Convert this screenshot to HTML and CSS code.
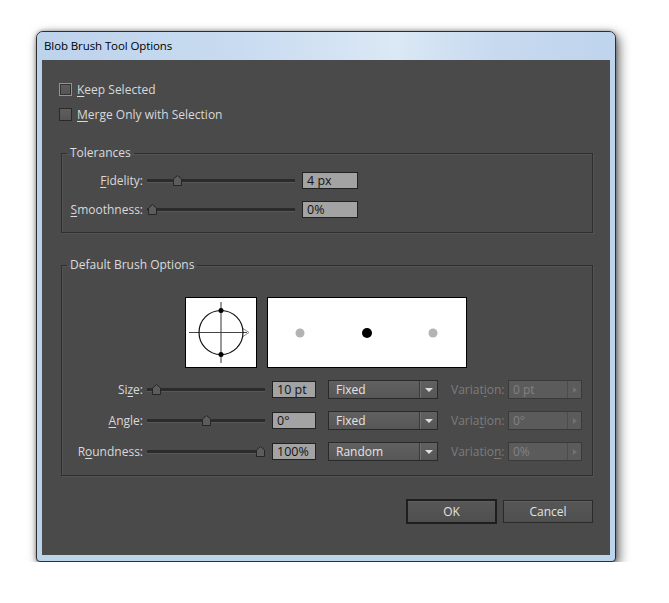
FILE: index.html
```html
<!DOCTYPE html>
<html>
<head>
<meta charset="utf-8">
<link rel="stylesheet" href="styles.css">
</head>
<body>
<div class="window">
  <div class="titlebar">Blob Brush Tool Options</div>
  <div class="content">
    <div class="check-row"><span class="checkbox focused"></span><span><u>K</u>eep Selected</span></div>
    <div class="check-row"><span class="checkbox"></span><span><u>M</u>erge Only with Selection</span></div>

    <fieldset class="group tolerances">
      <legend>Tolerances</legend>
      <div class="row tol-row">
        <span class="lbl"><u>F</u>idelity:</span>
        <div class="slider tol-slider"><span class="thumb" style="left:26px"><svg width="9" height="11" viewBox="0 0 9 11"><polygon points="0.5,4 4.5,0.5 8.5,4 8.5,10.5 0.5,10.5" fill="#5c5c5c" stroke="#262626"/></svg></span></div>
        <div class="field tol-field">4 px</div>
      </div>
      <div class="row tol-row">
        <span class="lbl"><u>S</u>moothness:</span>
        <div class="slider tol-slider"><span class="thumb" style="left:1px"><svg width="9" height="11" viewBox="0 0 9 11"><polygon points="0.5,4 4.5,0.5 8.5,4 8.5,10.5 0.5,10.5" fill="#5c5c5c" stroke="#262626"/></svg></span></div>
        <div class="field tol-field">0%</div>
      </div>
    </fieldset>

    <fieldset class="group brush">
      <legend>Default Brush Options</legend>
      <div class="previews">
        <div class="preview small">
          <svg width="70" height="69" viewBox="0 0 70 69">
            <line x1="35" y1="4" x2="35" y2="65" stroke="#333" stroke-width="1"/>
            <line x1="3" y1="34.5" x2="61" y2="34.5" stroke="#444" stroke-width="1"/>
            <polyline points="57,30.5 63,34.5 57,38.5" fill="none" stroke="#8a8a8a" stroke-width="1"/>
            <circle cx="35" cy="34.5" r="22" fill="none" stroke="#111" stroke-width="1.2"/>
            <circle cx="35" cy="12.5" r="2.5" fill="#000"/>
            <circle cx="35" cy="56.5" r="2.5" fill="#000"/>
          </svg>
        </div>
        <div class="preview large">
          <svg width="198" height="69" viewBox="0 0 198 69">
            <circle cx="32" cy="35" r="4.5" fill="#b3b3b3"/>
            <circle cx="99" cy="35" r="5" fill="#000"/>
            <circle cx="165" cy="35" r="4.5" fill="#b3b3b3"/>
          </svg>
        </div>
      </div>

      <div class="row brush-row">
        <span class="lbl">Si<u>z</u>e:</span>
        <div class="slider brush-slider"><span class="thumb" style="left:5px"><svg width="9" height="11" viewBox="0 0 9 11"><polygon points="0.5,4 4.5,0.5 8.5,4 8.5,10.5 0.5,10.5" fill="#5c5c5c" stroke="#262626"/></svg></span></div>
        <div class="field brush-field">10 pt</div>
        <div class="dropdown"><span class="dd-text">Fixed</span><span class="dd-btn"><span class="tri-down"></span></span></div>
        <span class="var-lbl">Variat<u>i</u>on:</span>
        <div class="dis-field"><span class="dis-text">0 pt</span><span class="dis-btn"><span class="tri-right"></span></span></div>
      </div>
      <div class="row brush-row">
        <span class="lbl"><u>A</u>ngle:</span>
        <div class="slider brush-slider"><span class="thumb" style="left:55px"><svg width="9" height="11" viewBox="0 0 9 11"><polygon points="0.5,4 4.5,0.5 8.5,4 8.5,10.5 0.5,10.5" fill="#5c5c5c" stroke="#262626"/></svg></span></div>
        <div class="field brush-field">0°</div>
        <div class="dropdown"><span class="dd-text">Fixed</span><span class="dd-btn"><span class="tri-down"></span></span></div>
        <span class="var-lbl">Varia<u>t</u>ion:</span>
        <div class="dis-field"><span class="dis-text">0°</span><span class="dis-btn"><span class="tri-right"></span></span></div>
      </div>
      <div class="row brush-row">
        <span class="lbl">R<u>o</u>undness:</span>
        <div class="slider brush-slider"><span class="thumb" style="left:109px"><svg width="9" height="11" viewBox="0 0 9 11"><polygon points="0.5,4 4.5,0.5 8.5,4 8.5,10.5 0.5,10.5" fill="#5c5c5c" stroke="#262626"/></svg></span></div>
        <div class="field brush-field">100%</div>
        <div class="dropdown"><span class="dd-text">Random</span><span class="dd-btn"><span class="tri-down"></span></span></div>
        <span class="var-lbl">Variatio<u>n</u>:</span>
        <div class="dis-field"><span class="dis-text">0%</span><span class="dis-btn"><span class="tri-right"></span></span></div>
      </div>
    </fieldset>

    <div class="buttons">
      <button class="btn default">OK</button>
      <button class="btn">Cancel</button>
    </div>
  </div>
</div>
</body>
</html>
```

FILE: styles.css
```css
html, body {
  margin: 0;
  padding: 0;
  background: #ffffff;
}

body {
  font-family: "Open Sans", "Noto Sans", sans-serif;
  font-size: 12px;
}

.window {
  box-sizing: border-box;
  width: 580px;
  height: 531px;
  margin: 31px 0 0 36px;
  border: 1px solid #2e2e2e;
  border-radius: 7px 7px 4px 4px;
  background: #bcd3ec;
  box-shadow: 3px 4px 12px rgba(0, 0, 0, 0.6), 0 0 4px rgba(0, 0, 0, 0.35);
  display: flex;
  flex-direction: column;
}

.titlebar {
  height: 28px;
  line-height: 28px;
  padding-left: 7px;
  color: #000;
  font-size: 11.5px;
  letter-spacing: -0.1px;
  border-radius: 6px 6px 0 0;
  background: linear-gradient(90deg, #bdd3ec 0%, #c8dbf0 35%, #dbe8f5 62%, #c6d9ef 80%, #bfd4ed 100%);
}

.content {
  box-sizing: border-box;
  height: 495px;
  margin: 0 5px;
  padding: 17px 17px 0 17px;
  background: #4a4a4a;
  color: #d9d9d9;
}

u {
  text-decoration: underline;
  text-underline-offset: 2px;
}

.check-row {
  height: 25px;
  display: flex;
  align-items: center;
  gap: 5px;
}

.checkbox {
  box-sizing: border-box;
  width: 13px;
  height: 13px;
  border: 1px solid #2a2a2a;
  background: linear-gradient(#5e5e5e, #545454);
}

.checkbox.focused {
  border-color: #c58a3e;
  box-shadow: inset 0 0 0 1px #333;
}

.group {
  box-sizing: border-box;
  width: 532px;
  margin: 18px 0 0 2px;
  padding: 5px 0 8px 0;
  border: 1px solid #2e2e2e;
  box-shadow: inset 1px 1px 0 #545454, 1px 1px 0 #545454;
  min-width: 0;
}

.group.brush {
  margin-top: 24px;
  padding-top: 24px;
}

.group legend {
  margin-left: 5px;
  padding: 0 3px;
  line-height: 16px;
  color: #dcdcdc;
}

.row {
  display: flex;
  align-items: center;
}

.tol-row {
  height: 29px;
}

.brush-row {
  height: 31px;
}

.previews + .brush-row {
  margin-top: 6px;
}

.lbl {
  width: 81px;
  text-align: right;
  white-space: nowrap;
}

.slider {
  position: relative;
  height: 11px;
  margin-left: 4px;
}

.slider::before {
  content: "";
  position: absolute;
  left: 0;
  right: 0;
  top: 4px;
  height: 3px;
  background: #2b2b2b;
  border-bottom: 1px solid #585858;
}

.tol-slider {
  width: 148px;
}

.brush-slider {
  width: 118px;
}

.thumb {
  position: absolute;
  top: 0;
  width: 9px;
  height: 11px;
  display: block;
}

.thumb svg {
  display: block;
}

.field {
  box-sizing: border-box;
  height: 17px;
  margin-left: 7px;
  padding-left: 4px;
  line-height: 15px;
  background: #a3a3a3;
  border: 1px solid #222;
  color: #141414;
  font-size: 12.5px;
}

.tol-field {
  width: 56px;
}

.brush-field {
  width: 44px;
}

.dropdown {
  box-sizing: border-box;
  width: 110px;
  height: 19px;
  margin-left: 12px;
  display: flex;
  border: 1px solid #2a2a2a;
  background: linear-gradient(#616161, #565656);
  color: #e4e4e4;
}

.dd-text {
  flex: 1;
  padding-left: 7px;
  line-height: 17px;
}

.dd-btn {
  width: 17px;
  display: flex;
  align-items: center;
  justify-content: center;
  border-left: 1px solid #3a3a3a;
  box-shadow: inset 1px 0 0 #707070;
}

.tri-down {
  width: 0;
  height: 0;
  border-left: 4px solid transparent;
  border-right: 4px solid transparent;
  border-top: 4px solid #dedede;
}

.var-lbl {
  width: 53px;
  margin-left: 13px;
  color: #7c7c7c;
  white-space: nowrap;
}

.dis-field {
  box-sizing: border-box;
  width: 74px;
  height: 19px;
  margin-left: 4px;
  display: flex;
  border: 1px solid #3a3a3a;
  background: #5b5b5b;
  color: #818181;
}

.dis-text {
  flex: 1;
  padding-left: 4px;
  line-height: 17px;
}

.dis-btn {
  width: 13px;
  display: flex;
  align-items: center;
  justify-content: center;
  border-left: 1px solid #4c4c4c;
}

.tri-right {
  width: 0;
  height: 0;
  border-top: 3px solid transparent;
  border-bottom: 3px solid transparent;
  border-left: 4px solid #727272;
}

.previews {
  display: flex;
  gap: 10px;
  padding-left: 123px;
}

.preview {
  box-sizing: border-box;
  height: 71px;
  background: #fff;
  border: 1px solid #000;
}

.preview svg {
  display: block;
}

.preview.small {
  width: 72px;
}

.preview.large {
  width: 200px;
}

.buttons {
  display: flex;
  justify-content: flex-end;
  align-items: center;
  gap: 6px;
  margin-top: 23px;
}

.btn {
  box-sizing: border-box;
  width: 90px;
  height: 23px;
  padding: 0;
  font-family: inherit;
  font-size: 12px;
  color: #e2e2e2;
  background: linear-gradient(#575757, #4f4f4f);
  border: 1px solid #2a2a2a;
  box-shadow: inset 0 1px 0 #606060;
}

.btn.default {
  width: 91px;
  height: 25px;
  border: 2px solid #1e1e1e;
  box-shadow: inset 0 1px 0 #5e5e5e;
}
```
